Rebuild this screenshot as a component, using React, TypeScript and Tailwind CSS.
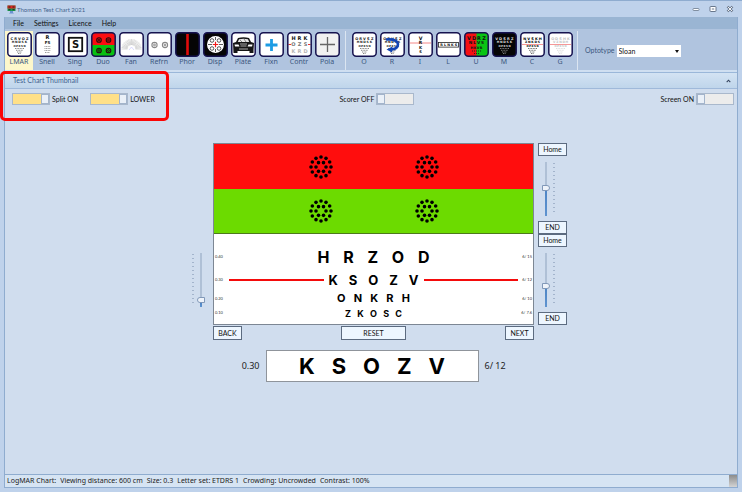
import { useState } from 'react'
import type { ReactNode } from 'react'

interface ChartRowProps {
  letters: string
  left: string
  right: string
  className: string
  lettersClass: string
  marked?: boolean
}

interface ToolItem {
  label: string
  bg?: string
  art: ReactNode
}

interface SheetProps {
  rows: string[]
  fill?: string
  line?: boolean
}

const OPTO_FONT = 'DejaVu Sans, sans-serif'

// small letter chart that narrows towards the bottom
function Sheet({ rows, fill = '#222', line = false }: SheetProps) {
  return (
    <g>
      {rows.map((row, r) => {
        const step = 3.9 - r * 0.7
        return row.split('').map((ch, i) => (
          <text
            key={`${r}-${i}`}
            x={12.5 + (i - (row.length - 1) / 2) * step}
            y={8 + r * 3.4}
            fill={fill}
            fontSize={3.6 - r * 0.5}
            fontWeight="bold"
            fontFamily={OPTO_FONT}
            textAnchor="middle"
          >
            {ch}
          </text>
        ))
      })}
      {line && <path d="M2 12.5H23" stroke="#f26a6a" strokeWidth="0.7" />}
      <path d="M8 16.5H17M9 18.3H16M10 20H15M11 21.5H14" stroke={fill} strokeWidth="1" strokeDasharray="1 0.6" opacity="0.55" />
    </g>
  )
}

function Glyph({ x, y, size, children, fill = '#111' }: { x: number; y: number; size: number; children: string; fill?: string }) {
  return (
    <text x={x} y={y} fontSize={size} fill={fill} fontWeight="bold" fontFamily={OPTO_FONT} textAnchor="middle">
      {children}
    </text>
  )
}

function Rings({ points, stroke, r }: { points: number[][]; stroke: string; r: number }) {
  return (
    <g fill="none" stroke={stroke}>
      {points.map(([x, y]) => (
        <g key={`${x}-${y}`}>
          <circle cx={x} cy={y} r={r} strokeWidth="1.1" />
          <circle cx={x} cy={y} r="0.9" strokeWidth="1" />
        </g>
      ))}
    </g>
  )
}

const chartTools: ToolItem[] = [
  { label: 'LMAR', art: <Sheet rows={['CRVOZ', 'HNDSK', 'OZKSN']} /> },
  {
    label: 'Snell',
    art: (
      <g>
        <Glyph x={12.5} y={7} size={5}>R</Glyph>
        <Glyph x={12.5} y={12} size={4}>FS</Glyph>
        <path d="M9.5 14.5H15.5M9.5 16.5H15.5M9.5 18.5H15.5M10 20.5H15" stroke="#999" strokeWidth="1.2" strokeDasharray="1 0.6" />
      </g>
    ),
  },
  {
    label: 'Sing',
    art: (
      <g>
        <rect x="5.8" y="5.8" width="13.4" height="13.4" fill="none" stroke="#111" strokeWidth="1.8" />
        <Glyph x={12.5} y={16.2} size={10}>S</Glyph>
      </g>
    ),
  },
  {
    label: 'Duo',
    bg: '#fb0d10',
    art: (
      <g>
        <path d="M1 13H24V21Q24 24 21 24H4Q1 24 1 21Z" fill="#08c011" />
        <Rings points={[[8, 8], [17.5, 8], [8, 18.5], [17.5, 18.5]]} stroke="#250d0d" r={2.3} />
      </g>
    ),
  },
  {
    label: 'Fan',
    art: (
      <g stroke="#b5b5b5" strokeWidth="0.5">
        {Array.from({ length: 21 }, (_, i) => {
          const a = (Math.PI * i) / 20
          return (
            <line
              key={i}
              x1={12.5 - 4 * Math.cos(a)}
              y1={17 - 4 * Math.sin(a)}
              x2={12.5 - 10 * Math.cos(a)}
              y2={17 - 10 * Math.sin(a)}
            />
          )
        })}
        <path d="M10 18L12.5 15L15 18" fill="none" stroke="#b8b8ff" />
      </g>
    ),
  },
  { label: 'Refrn', art: <Rings points={[[7.5, 13], [18, 13]]} stroke="#888" r={2.6} /> },
  { label: 'Phor', bg: '#050505', art: <path d="M12.5 2V23" stroke="#e00b0b" strokeWidth="2.6" /> },
  {
    label: 'Disp',
    bg: '#050505',
    art: (
      <g>
        <circle cx="12.5" cy="12.5" r="8.5" fill="#fff" />
        <g fill="none" stroke="#333" strokeWidth="0.8">
          <circle cx="9" cy="8.5" r="1.8" />
          <circle cx="16" cy="8.5" r="1.8" />
          <circle cx="9" cy="16.5" r="1.8" />
          <circle cx="16" cy="16.5" r="1.8" />
          <path d="M12.5 5V8M12.5 17V20M5 12.5H9M16 12.5H20" />
        </g>
        <path d="M12.5 9.8V15.2M9.8 12.5H15.2" stroke="#f01818" strokeWidth="1.2" />
      </g>
    ),
  },
  {
    label: 'Plate',
    art: (
      <g>
        <path
          d="M7 6Q12.5 4.5 18 6L20 10L23 11L22.5 18V21H18.5V19H6.5V21H2.5L2 11L5 10Z"
          fill="#161616"
        />
        <path d="M8 7.2Q12.5 6.2 17 7.2L18.2 10H6.8Z" fill="#e8e8e8" />
        <path d="M9 8L11 10M13 7L15 10" stroke="#555" strokeWidth="0.7" />
        <path d="M3.5 12.5H7.5L8.5 14.5H4Z M21.5 12.5H17.5L16.5 14.5H21Z" fill="#fff" />
        <path d="M9 12H16M9.5 14H15.5M8 17H17" stroke="#aaa" strokeWidth="1" />
      </g>
    ),
  },
  { label: 'Fixn', art: <path d="M12.5 7V19M6.5 13H18.5" stroke="#1c9ce4" strokeWidth="2.8" /> },
  {
    label: 'Contr',
    art: (
      <g>
        {['HRK', 'OZS', 'KRD'].map((row, r) =>
          row.split('').map((ch, i) => (
            <Glyph key={ch + r} x={6.5 + i * 6} y={8 + r * 6.4} size={5} fill={['#111', '#777', '#b5b5b5'][r]}>
              {ch}
            </Glyph>
          )),
        )}
        <path d="M1.5 12.5H4M21 12.5H23.5" stroke="#ee3030" />
      </g>
    ),
  },
  { label: 'Pola', bg: '#f1f1f1', art: <path d="M12.5 5V20M5 12.5H20" stroke="#666" strokeWidth="1.3" /> },
]

const letterTools: ToolItem[] = [
  { label: 'O', art: <Sheet rows={['ORVSZ', 'HNDSK', 'OZKSN']} /> },
  {
    label: 'R',
    art: (
      <g>
        <Sheet rows={['ORVSZ', 'HNDSK', 'OZKSN']} />
        <path d="M6 7.5Q17 6.5 18 12Q18 17 11 17.5" fill="none" stroke="#1245b5" strokeWidth="2.6" />
        <path d="M12.5 14.5L6.5 17.5L12 20.5Z" fill="#1245b5" />
      </g>
    ),
  },
  {
    label: 'I',
    art: (
      <g>
        <path d="M2 11H23" stroke="#f26a6a" strokeWidth="0.8" />
        {['V', 'R', 'K', 'S'].map((ch, i) => (
          <Glyph key={ch} x={12.5} y={8 + i * 4.3} size={4.8 - i * 0.4}>{ch}</Glyph>
        ))}
      </g>
    ),
  },
  {
    label: 'L',
    art: (
      <g>
        <rect x="2.5" y="10.5" width="20" height="4.6" fill="none" stroke="#222" strokeWidth="0.8" />
        {'RLNKS'.split('').map((ch, i) => (
          <Glyph key={ch} x={5.5 + i * 3.6} y={14.1} size={3.4}>{ch}</Glyph>
        ))}
      </g>
    ),
  },
  {
    label: 'U',
    bg: '#f70f12',
    art: (
      <g>
        <path d="M12.5 1H21Q24 1 24 4V21Q24 24 21 24H12.5Z" fill="#09c414" />
        {['VDRZ', 'NLVS', 'HKVR'].map((row, r) =>
          row.split('').map((ch, i) => (
            <Glyph key={ch + r} x={12.5 + (i - 1.5) * (5 - r)} y={7.5 + r * 4.6} size={5 - r * 0.8}>
              {ch}
            </Glyph>
          )),
        )}
        <path d="M8 19H17M10 21.5H15" stroke="#222" strokeDasharray="1 1" />
      </g>
    ),
  },
  { label: 'M', bg: '#050505', art: <Sheet rows={['VDSRZ', 'HNDSK', 'OZKSN']} fill="#ddd" /> },
  { label: 'C', art: <Sheet rows={['NVSKH', 'ZNKDS', 'OZKSN']} fill="#000" line /> },
  { label: 'G', art: <Sheet rows={['ODSHK', 'VZNDH', 'OZKSN']} fill="#c4c4c4" line /> },
]

const statusItems = [
  'LogMAR Chart:',
  'Viewing distance: 600 cm',
  'Size: 0.3',
  'Letter set: ETDRS 1',
  'Crowding: Uncrowded',
  'Contrast: 100%',
]

function ToolButton({ item, active = false }: { item: ToolItem; active?: boolean }) {
  return (
    <button
      type="button"
      className={`flex w-7 flex-col items-center pt-px font-['Noto_Sans','Open_Sans',sans-serif] text-[7px] leading-[10px] text-[#3c5880] ${active ? 'bg-[#fdf7cb]' : ''}`}
    >
      <svg viewBox="0 0 25 25" className="h-[25px] w-[25px]" aria-hidden="true">
        <rect x="0.8" y="0.8" width="23.4" height="23.4" rx="3.5" fill={item.bg ?? '#fff'} />
        {item.art}
        <rect x="0.8" y="0.8" width="23.4" height="23.4" rx="3.5" fill="none" stroke="#15124f" strokeWidth="1.5" />
      </svg>
      {item.label}
    </button>
  )
}

function Toggle({ label, defaultChecked = false, labelFirst = false }: { label: string; defaultChecked?: boolean; labelFirst?: boolean }) {
  return (
    <label className={`flex items-center gap-[2px] ${labelFirst ? 'flex-row-reverse' : ''}`}>
      <input
        type="checkbox"
        role="switch"
        defaultChecked={defaultChecked}
        className="flex h-3 w-[38px] appearance-none border border-[#a9b8cc] bg-[#ececec] before:h-full before:w-2 before:border before:border-[#a3b4cb] before:bg-[#eaf0f8] before:content-[''] checked:justify-end checked:bg-[#ffe088]"
      />
      {label}
    </label>
  )
}

function Slider({ label, initial, flip = false }: { label: string; initial: number; flip?: boolean }) {
  const [value, setValue] = useState(initial)
  const fill = `linear-gradient(to top, #5f93cf, #4d84c4 ${value}%, #afc0d6 ${value}%)`
  return (
    <div className={`flex items-center gap-[3px] ${flip ? 'flex-row-reverse' : ''}`}>
      <input
        type="range"
        aria-label={label}
        value={value}
        onChange={(event) => setValue(Number(event.target.value))}
        style={{ backgroundImage: fill }}
        className={`h-[54px] w-2 appearance-none bg-[length:2px_100%] bg-center bg-no-repeat [direction:rtl] [writing-mode:vertical-lr] [&::-webkit-slider-thumb]:h-[6px] [&::-webkit-slider-thumb]:w-2 [&::-webkit-slider-thumb]:appearance-none [&::-webkit-slider-thumb]:border [&::-webkit-slider-thumb]:border-[#8198b8] [&::-webkit-slider-thumb]:bg-[#eef3fa] ${
          flip ? '[&::-webkit-slider-thumb]:rounded-l-[3px]' : '[&::-webkit-slider-thumb]:rounded-r-[3px]'
        }`}
      />
      <svg viewBox="0 0 2 54" className="h-[54px] w-[2px]" aria-hidden="true">
        <path d="M1 1V53" stroke="#a3b4cc" strokeWidth="2" strokeDasharray="1 3" />
      </svg>
    </div>
  )
}

function PushButton({ children, className }: { children: string; className: string }) {
  return (
    <button type="button" className={`border border-[#5c6b80] bg-[#edf6ff] text-[7px] leading-none text-[#111] ${className}`}>
      {children}
    </button>
  )
}

function SliderColumn({ name, initial }: { name: string; initial: number }) {
  return (
    <div className="flex h-[91px] flex-col justify-between">
      <PushButton className="h-[13px] w-[29px]">Home</PushButton>
      <div className="pl-1">
        <Slider label={name} initial={initial} />
      </div>
      <PushButton className="h-[13px] w-[29px]">END</PushButton>
    </div>
  )
}

function DotTarget() {
  const ring = (count: number, radius: number) =>
    Array.from({ length: count }, (_, i) => {
      const a = (2 * Math.PI * i) / count
      return <circle key={`${count}-${i}`} cx={12 + radius * Math.cos(a)} cy={12 + radius * Math.sin(a)} r="1.8" />
    })
  return (
    <svg viewBox="0 0 24 24" className="h-6 w-6" aria-hidden="true">
      {ring(12, 10)}
      {ring(6, 5)}
    </svg>
  )
}

function Letters({ text, className }: { text: string; className: string }) {
  return (
    <div className={`flex justify-between font-['Inter',sans-serif] leading-none font-bold text-black ${className}`}>
      {text.split('').map((ch) => (
        <span key={ch}>{ch}</span>
      ))}
    </div>
  )
}

function ChartRow({ letters, left, right, className, lettersClass, marked = false }: ChartRowProps) {
  const rule = `h-[2px] flex-1 ${marked ? 'bg-[#f40b0b]' : ''}`
  return (
    <div className={`flex items-center gap-[5px] px-px ${className}`}>
      <span className="w-[9px] text-[4px] leading-none text-[#333]">{left}</span>
      <div className={rule} />
      <Letters text={letters} className={lettersClass} />
      <div className={rule} />
      <span className="flex w-[9px] justify-end text-[4px] leading-none whitespace-nowrap text-[#333]">{right}</span>
    </div>
  )
}

function TitleBar() {
  return (
    <header className="flex h-4 items-center gap-px pr-[3px] pl-[2px] text-[6px] text-[#3f5f8c]">
      <svg viewBox="0 0 9 9" className="h-[9px] w-[9px]" aria-hidden="true">
        <rect x="0.5" y="0.5" width="8" height="5.5" fill="#1c9b4f" />
        <rect x="0.5" y="0.5" width="8" height="3" fill="#e02822" />
        <path d="M1.5 2H3.5M5.5 2H7.5M1.5 4.7H3.5M5.5 4.7H7.5" stroke="#222" />
        <path d="M3 6H6V7.5L7 8.5H2L3 7.5Z" fill="#6b93d1" />
      </svg>
      <h1>Thomson Test Chart 2021</h1>
      <div className="ml-auto flex gap-[9px]">
        <button type="button" aria-label="Minimise">
          <svg viewBox="0 0 8 8" className="h-2 w-2">
            <rect x="1" y="3.5" width="6" height="2" rx="0.8" fill="#fff" stroke="#68778c" strokeWidth="0.8" />
          </svg>
        </button>
        <button type="button" aria-label="Maximise">
          <svg viewBox="0 0 8 8" className="h-2 w-2">
            <rect x="1" y="1.5" width="6" height="5" rx="0.6" fill="#fff" stroke="#68778c" />
            <path d="M2.8 4H5.2" stroke="#68778c" />
          </svg>
        </button>
        <button type="button" aria-label="Close">
          <svg viewBox="0 0 8 8" className="h-2 w-2">
            <path d="M1.5 1.5L6.5 6.5M6.5 1.5L1.5 6.5" stroke="#68778c" strokeWidth="2.4" />
            <path d="M1.8 1.8L6.2 6.2M6.2 1.8L1.8 6.2" stroke="#fff" strokeWidth="0.9" />
          </svg>
        </button>
      </div>
    </header>
  )
}

function Toolbar() {
  return (
    <div className="flex h-[41px] items-stretch bg-[#b0c4df] pt-[2px]">
      <div className="flex">
        {chartTools.map((item, i) => (
          <ToolButton key={item.label} item={item} active={i === 0} />
        ))}
      </div>
      <div className="mx-1 w-px bg-[#dbe5f1]" />
      <div className="flex">
        {letterTools.map((item) => (
          <ToolButton key={item.label} item={item} />
        ))}
      </div>
      <div className="mr-1 ml-[3px] w-px bg-[#dbe5f1]" />
      <div className="flex items-center gap-[2px] pl-[3px] text-[7px] text-[#3c5880]">
        <label htmlFor="optotype">Optotype</label>
        <div className="relative">
          <select id="optotype" defaultValue="Sloan" className="block h-3 w-16 appearance-none bg-white pl-[2px] text-[7px] leading-3 text-[#111]">
            <option>Sloan</option>
            <option>British</option>
          </select>
          <svg viewBox="0 0 4 3" className="pointer-events-none absolute top-[5px] right-[2px] h-[3px] w-1" aria-hidden="true">
            <path d="M0 0H4L2 3Z" fill="#111" />
          </svg>
        </div>
      </div>
    </div>
  )
}

function TestChart() {
  return (
    <div className="w-[321px] border border-[#7d8794] bg-white">
      <div className="flex h-[45px] items-center justify-center gap-[82px] bg-[#ff0d0d]">
        <DotTarget />
        <DotTarget />
      </div>
      <div className="flex h-[45px] items-center justify-center gap-[82px] border-b border-[#4d7a1c] bg-[#6cdb00] pb-px">
        <DotTarget />
        <DotTarget />
      </div>
      <div className="pt-3 pb-[3px]">
        <ChartRow letters="HRZOD" left="0.40" right="6/ 15" className="h-[22px]" lettersClass="w-[112px] text-[16px]" />
        <ChartRow letters="KSOZV" left="0.30" right="6/ 12" className="h-6" lettersClass="w-[90px] text-[13px]" marked />
        <ChartRow letters="ONKRH" left="0.20" right="6/ 10" className="h-[13px]" lettersClass="w-[73px] text-[11px]" />
        <ChartRow letters="ZKOSC" left="0.10" right="6/ 7.6" className="h-4" lettersClass="w-[57px] text-[9px]" />
      </div>
    </div>
  )
}

export default function App() {
  return (
    <div className="relative flex min-h-screen flex-col border-t border-[#8faccf] bg-[#bfd2eb] px-[5px] pb-1 font-['Lato','Open_Sans',sans-serif]">
      <TitleBar />
      <div className="-mx-px flex flex-1 flex-col border border-t-0 border-[#8faccf] bg-[#d0ddee]">
        <nav className="flex h-3 items-center gap-[10px] bg-[#9ab5d3] pl-2 text-[7px] text-[#111]">
          <button type="button">File</button>
          <button type="button">Settings</button>
          <button type="button">Licence</button>
          <button type="button">Help</button>
        </nav>
        <Toolbar />
        <div className="h-[3px] border-b border-[#9ab7d9] bg-[#cfdff1]" />
        <main className="flex flex-1 flex-col">
          <div className="flex h-4 items-center justify-between border-b border-[#9fb9da] bg-linear-to-b from-[#d3e3f3] to-[#bfd5eb] pr-[6px] pl-2 text-[7px] text-[#3d5f8f]">
            <h2>Test Chart Thumbnail</h2>
            <button type="button" aria-label="Collapse">
              <svg viewBox="0 0 5 4" className="h-1 w-[5px]">
                <path d="M0.7 3.2L2.5 1.2L4.3 3.2" fill="none" stroke="#33435c" strokeWidth="1.1" />
              </svg>
            </button>
          </div>

          <div className="grid grid-cols-[1fr_auto_1fr] pt-1 pr-[3px] pl-[7px] text-[7px] leading-3 text-[#111]">
            <div className="flex gap-3">
              <Toggle label="Split ON" defaultChecked />
              <Toggle label="LOWER" defaultChecked />
            </div>
            <div className="pl-2">
              <Toggle label="Scorer OFF" labelFirst />
            </div>
            <div className="flex justify-end">
              <Toggle label="Screen ON" labelFirst />
            </div>
          </div>

          <div className="grid grid-cols-[1fr_auto_1fr] gap-x-1 pt-[38px] pl-[5px]">
            <div className="flex items-end justify-end pr-1 pb-[18px]">
              <Slider label="Line size" initial={8} flip />
            </div>
            <TestChart />
            <div className="flex flex-col">
              <SliderColumn name="Upper chart" initial={52} />
              <SliderColumn name="Lower chart" initial={37} />
            </div>
            <div className="col-start-2 flex justify-between pt-px">
              <PushButton className="h-[14px] w-[29px]">BACK</PushButton>
              <PushButton className="h-[14px] w-[65px]">RESET</PushButton>
              <PushButton className="h-[14px] w-[29px]">NEXT</PushButton>
            </div>
          </div>

          <div className="flex items-center justify-center gap-[6px] pt-[10px] pl-[2px] font-['Noto_Sans','Open_Sans',sans-serif] text-[9px] text-[#222]">
            <span className="w-6 text-right">0.30</span>
            <div className="flex h-8 w-[213px] items-center justify-center border border-[#8f949b] bg-white">
              <Letters text="KSOZV" className="w-[146px] text-[22px]" />
            </div>
            <span className="w-6 whitespace-nowrap">6/ 12</span>
          </div>
        </main>
        <footer className="flex h-[13px] items-center gap-1 border-t border-[#8faccf] bg-[#d6e4f3] pl-[2px] font-['Noto_Sans','Open_Sans',sans-serif] text-[7px] text-[#222]">
          {statusItems.map((item) => (
            <span key={item}>{item}</span>
          ))}
          <div className="ml-auto h-3 w-2 bg-linear-to-b from-[#8c8c8c] to-[#d4d4d4]" />
        </footer>
      </div>
      <div className="pointer-events-none absolute top-[70px] left-0 h-[50px] w-[169px] rounded-[5px] border-3 border-[#fb0505]" />
    </div>
  )
}
